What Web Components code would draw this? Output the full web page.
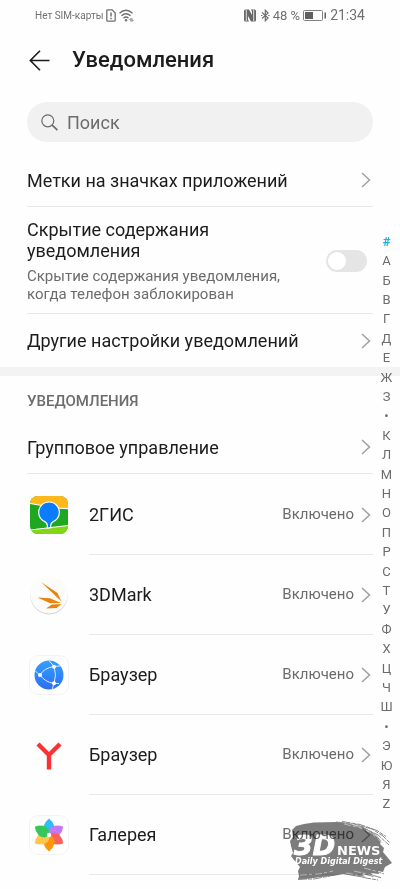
<!DOCTYPE html>
<html lang="ru">
<head>
<meta charset="utf-8">
<meta name="viewport" content="width=device-width, initial-scale=1">
<title>Уведомления</title>
<style>
    body {
        margin: 0;
        background: #fefefe;
        color: #1c1c1c;
        font-family: Roboto, "Noto Sans", sans-serif;
        font-size: 18px;
        line-height: 21px;
        --gutter: 27px;
        --muted: #6c6c6c;
        --line: #e8e8e8;
    }
</style>
</head>
<body>
<settings-page>
    <status-bar slot="status" network="Нет SIM-карты" battery="48 %" time="21:34"></status-bar>
    <page-header slot="header">Уведомления</page-header>
    <search-field label="Поиск"></search-field>
    <settings-row>Метки на значках приложений</settings-row>
    <switch-row>
        Скрытие содержания уведомления
        <span slot="hint">Скрытие содержания уведомления, когда телефон заблокирован</span>
    </switch-row>
    <settings-row last>Другие настройки уведомлений</settings-row>
    <section-title>УВЕДОМЛЕНИЯ</section-title>
    <settings-row>Групповое управление</settings-row>
    <app-list>
        <app-row icon="gis" state="Включено">2ГИС</app-row>
        <app-row icon="mark" state="Включено">3DMark</app-row>
        <app-row icon="browser" state="Включено">Браузер</app-row>
        <app-row icon="yandex" state="Включено">Браузер</app-row>
        <app-row icon="gallery" state="Включено">Галерея</app-row>
    </app-list>
    <alpha-index slot="overlay" letters="#АБВГДЕЖЗ•КЛМНОПРСТУФХЦЧШ•ЭЮЯZ"></alpha-index>
    <news-mark slot="overlay"></news-mark>
</settings-page>

<script>
/**
 * Base class, clones the given markup into an open shadow root.
 */
class BaseElement extends HTMLElement {
    connectedCallback() {
        if(this.shadowRoot) {
            return;
        }

        const template = document.createElement("template");

        template.innerHTML = this.render();
        this.attachShadow({mode: "open"});
        this.shadowRoot.appendChild(template.content.cloneNode(true));
    }
}

const chevron = `
    <svg width="10" height="16" viewBox="0 0 10 16" fill="none" stroke="#a0a0a0" stroke-width="1.5" aria-hidden="true">
        <path d="M1 1l7.5 7L1 15"/>
    </svg>`;

class SettingsPage extends BaseElement {
    render() {
        return `
            <style>
                :host {
                    display: block;
                    position: relative;
                    min-height: 100vh;
                    overflow: hidden;
                }
            </style>
            <slot name="status"></slot>
            <slot name="header"></slot>
            <main><slot></slot></main>
            <slot name="overlay"></slot>`;
    }
}

class StatusBar extends BaseElement {
    render() {
        return `
            <style>
                :host {
                    display: flex;
                    justify-content: space-between;
                    align-items: center;
                    height: 30px;
                    padding: 0 35px;
                    color: #707070;
                    font-size: 14px;
                }
                div { display: flex; align-items: center; gap: 3px; }
                .network { font-size: 10px; }
                .battery { font-size: 13px; }
                svg { display: block; }
            </style>
            <div>
                <span class="network">${this.getAttribute("network")}</span>
                <svg width="10" height="13" viewBox="0 0 10 13" fill="none" stroke="#707070" stroke-width="1.3">
                    <path d="M1.6.8h4.6L9.2 4v7.2q0 1-1 1H1.8q-1 0-1-1V1.6q0-.8.8-.8z"/>
                    <path d="M5 3.4v4M5 8.7v1.5" stroke-width="1.5"/>
                </svg>
                <svg width="15" height="13" viewBox="0 0 15 13" fill="none" stroke="#707070" stroke-width="1.4">
                    <path d="M.5 4.3q6.500-6 13 0M2.500 6.800q4.500-4 9 0M4.500 9.200q2.500-2.200 5 0"/>
                    <circle cx="7" cy="11.300" r="1.200" fill="#707070" stroke="none"/>
                    <path d="M10.200 11.200l1.600-1.700v3M13 9v3.500l1.700-1.700" stroke-width=".8"/>
                </svg>
            </div>
            <div>
                <svg width="12" height="13" viewBox="0 0 12 13">
                    <path fill="#686868" d="M1.500.5H5l3 5.500V2.500L7 .5h3.500q1.500 0 1.500 1.500v9q0 1.500-1.500 1.500H7L4 7v3.500l1 2H1.500Q0 12.500 0 11V2Q0 .5 1.500.5z"/>
                    <path fill="none" stroke="#fefefe" stroke-width=".8" d="M2.300 1v11M9.700 1v11"/>
                </svg>
                <svg width="11" height="13" viewBox="-2 0 11 13" fill="none" stroke="#707070" stroke-width="1.200">
                    <path d="M1 3.500l6 5.500-2.700 2.800V1.200L7 4 1 9.500"/>
                    <path d="M0 6.500h1.400M7.200 6.500h1.400"/>
                </svg>
                <span class="battery">${this.getAttribute("battery")}</span>
                <svg width="24" height="11" viewBox="0 0 24 11">
                    <rect x=".5" y=".5" width="19" height="10" rx="1" fill="none" stroke="#808080"/>
                    <path fill="#606060" d="M2 2h8v7H2zM21.500 2.500H23v6h-1.500z"/>
                </svg>
                <span>${this.getAttribute("time")}</span>
            </div>`;
    }
}

class PageHeader extends BaseElement {
    render() {
        return `
            <style>
                :host {
                    display: flex;
                    align-items: center;
                    gap: 20px;
                    height: 60px;
                    padding: 0 var(--gutter);
                }
                button {
                    display: flex;
                    width: 25px;
                    padding: 0 2px;
                    border: 0;
                    background: none;
                }
                h1 {
                    margin: 0;
                    font-size: 22px;
                    font-weight: 500;
                    line-height: 28px;
                }
            </style>
            <button type="button" aria-label="Назад">
                <svg width="21" height="21" viewBox="0 0 21 21" fill="none" stroke="#1c1c1c" stroke-width="1.6">
                    <path d="M20.500 10.500H1.500M11 .8l-9.700 9.700L11 20.200"/>
                </svg>
            </button>
            <h1><slot></slot></h1>`;
    }
}

class SearchField extends BaseElement {
    render() {
        const label = this.getAttribute("label");

        return `
            <style>
                :host { display: block; padding: 12px var(--gutter); }
                label {
                    display: flex;
                    align-items: center;
                    gap: 9px;
                    height: 40px;
                    padding: 0 14px;
                    border-radius: 20px;
                    background: #f1f1f1;
                }
                input {
                    flex: 1;
                    min-width: 0;
                    padding: 0;
                    border: 0;
                    outline: 0;
                    background: none;
                    color: inherit;
                    font: inherit;
                }
                input::placeholder { color: var(--muted); opacity: 1; }
            </style>
            <label>
                <svg width="17" height="17" viewBox="0 0 17 17" fill="none" stroke="#6c6c6c" stroke-width="1.2">
                    <circle cx="6.8" cy="6.8" r="6"/>
                    <path d="M11.200 11.200l5.200 5" stroke-width="1.7"/>
                </svg>
                <input type="search" placeholder="${label}" aria-label="${label}">
            </label>`;
    }
}

class SettingsRow extends BaseElement {
    render() {
        return `
            <style>
                :host { display: block; padding: 0 var(--gutter); }
                button {
                    display: flex;
                    justify-content: space-between;
                    align-items: center;
                    box-sizing: border-box;
                    width: 100%;
                    height: 53px;
                    padding: 0 2px 0 0;
                    border: 0;
                    border-bottom: 1px solid var(--line);
                    background: none;
                    color: inherit;
                    font: inherit;
                    text-align: left;
                }
                :host([last]) button { border-bottom: 0; }
            </style>
            <button type="button"><span><slot></slot></span>${chevron}</button>`;
    }
}

class SwitchRow extends BaseElement {
    render() {
        return `
            <style>
                :host { display: block; padding: 0 var(--gutter); }
                label {
                    display: flex;
                    justify-content: space-between;
                    align-items: center;
                    gap: 24px;
                    padding: 12px 6px 10px 0;
                    border-bottom: 1px solid var(--line);
                }
                .text { flex: 1; max-width: 270px; }
                .title { display: block; max-width: 240px; }
                .hint {
                    display: block;
                    margin-top: 6px;
                    color: var(--muted);
                    font-size: 15px;
                    line-height: 18px;
                }
                input {
                    flex: none;
                    appearance: none;
                    width: 41px;
                    height: 22px;
                    margin: 0;
                    padding: 2px;
                    border-radius: 11px;
                    background: #e5e5e5;
                }
                input::before {
                    content: "";
                    display: block;
                    width: 18px;
                    height: 18px;
                    border-radius: 50%;
                    background: #fff;
                }
                input:checked { background: #0a9bf5; }
                input:checked::before { margin-left: auto; }
            </style>
            <label>
                <span class="text">
                    <span class="title"><slot></slot></span>
                    <span class="hint"><slot name="hint"></slot></span>
                </span>
                <input type="checkbox" role="switch">
            </label>`;
    }
}

class SectionTitle extends BaseElement {
    render() {
        return `
            <style>
                :host { display: block; border-top: 9px solid #f3f3f3; }
                h2 {
                    margin: 0;
                    padding: 15px var(--gutter) 9px;
                    color: var(--muted);
                    font-size: 15px;
                    font-weight: 500;
                    line-height: 21px;
                }
            </style>
            <h2><slot></slot></h2>`;
    }
}

class AppList extends BaseElement {
    render() {
        return `
            <style>
                :host { display: block; padding: 1px var(--gutter) 0; }
            </style>
            <div role="list"><slot></slot></div>`;
    }
}

const petals = ["#30bdf5", "#c778f5", "#fa6260", "#ff950a", "#ffc64d", "#35c759"]
    .map((color, i) => `<path fill="${color}" transform="rotate(${i * 60} 22 22)" d="M22 23c-4.500-3-6-5.500-5.500-9.500Q18 8.500 22 5.500q4 3 5.500 8c.5 4-1 6.500-5.500 9.500z"/>`)
    .join("");

const appIcons = {
    gis: `
        <clipPath id="tile"><rect x="3" y="3" width="38" height="38" rx="8"/></clipPath>
        <g clip-path="url(#tile)">
            <path fill="#1fa81f" d="M3 3h38v38H3z"/>
            <path fill="#ffb81c" d="M3 3h38v12.500l-13-.8L3 10.500z"/>
            <path fill="#82d615" d="M3 37l38-4.500V41H3z"/>
            <path fill="none" stroke="#fff" stroke-width="1.2" d="M3 10.500l12 2M29 15l12 .6M3 37l38-4.500"/>
            <path fill="#0a7cff" stroke="#fff" stroke-width="1.2" d="M20.300 35v-3c-.3-2.500-1.800-3.200-4.500-4.500a10.300 10.300 0 1 1 12.400 0c-2.700 1.300-4.200 2-4.500 4.500v2.700z"/>
        </g>`,
    mark: `
        <circle cx="22" cy="23" r="18.5" fill="#d2d2d2"/>
        <circle cx="22" cy="22" r="18.5" fill="#fcfcfc"/>
        <path fill="#e88510" d="M14 9l16.500 11 4 8.500zM10.500 24.500l12.500.7L34 30l-11 .2zM19 35.500l6-4 9.500-.4-5 4z"/>`,
    browser: `
        <rect x="2.5" y="2.5" width="39" height="39" rx="9" fill="#fff" stroke="#f3f3f3"/>
        <linearGradient id="globe" x2="0" y2="1"><stop stop-color="#32a0ff"/><stop offset="1" stop-color="#2f6df2"/></linearGradient>
        <circle cx="22" cy="22" r="14.5" fill="url(#globe)"/>
        <path fill="none" stroke="#dcecff" d="M13 22q4-7 14-8.500l6-.5M27 13.500q3 8 0 17M13 22q5 7 14 8.500l5 0M13 22q-2-1-4.500-4M27 13.500l-5-6M27 30.500l-2 6"/>
        <g fill="#fff"><circle cx="13" cy="22" r="2"/><circle cx="27" cy="13.700" r="2"/><circle cx="27" cy="30.300" r="2"/></g>`,
    yandex: `<path fill="none" stroke="#fa3232" stroke-width="4.4" d="M11 11l11 11 11-11M22 21v15.500"/>`,
    gallery: `
        <rect x="2.5" y="2.5" width="39" height="39" rx="9" fill="#fff" stroke="#f3f3f3"/>
        ${petals}
        <circle cx="22" cy="22" r="2.2" fill="#fff"/>`
};

class AppRow extends BaseElement {
    render() {
        return `
            <style>
                :host { display: block; }
                button {
                    display: flex;
                    align-items: center;
                    gap: 18px;
                    width: 100%;
                    height: 80px;
                    padding: 0;
                    border: 0;
                    background: none;
                    color: inherit;
                    font: inherit;
                    text-align: left;
                }
                .body {
                    display: flex;
                    flex: 1;
                    align-items: center;
                    gap: 7px;
                    box-sizing: border-box;
                    height: 100%;
                    padding-right: 2px;
                    border-bottom: 1px solid var(--line);
                }
                .name { flex: 1; }
                .state { color: var(--muted); font-size: 15px; }
            </style>
            <button type="button">
                <svg width="44" height="44" viewBox="0 0 44 44" aria-hidden="true">${appIcons[this.getAttribute("icon")]}</svg>
                <span class="body">
                    <span class="name"><slot></slot></span>
                    <span class="state">${this.getAttribute("state")}</span>
                    ${chevron}
                </span>
            </button>`;
    }

    connectedCallback() {
        super.connectedCallback();
        this.setAttribute("role", "listitem");
    }
}

/**
 * Quick-jump letters along the right edge, lies over the list.
 */
class AlphaIndex extends BaseElement {
    render() {
        const items = [...this.getAttribute("letters")]
            .map((letter) => `<a href="#">${letter}</a>`)
            .join("");

        return `
            <style>
                :host {
                    position: absolute;
                    top: 232px;
                    right: 0;
                    width: 27px;
                    height: 582px;
                }
                nav {
                    display: flex;
                    flex-direction: column;
                    height: 100%;
                }
                a {
                    display: flex;
                    flex: 1;
                    justify-content: center;
                    align-items: center;
                    color: var(--muted);
                    font-size: 13px;
                    line-height: 18px;
                    text-decoration: none;
                }
                a:first-child { color: #1eaee8; font-weight: 700; }
            </style>
            <nav aria-label="Алфавитный указатель">${items}</nav>`;
    }
}

/**
 * Brush-stroke logo in the bottom corner, the list shows through it.
 */
class NewsMark extends BaseElement {
    render() {
        return `
            <style>
                :host {
                    position: absolute;
                    right: 6px;
                    bottom: 7px;
                    mix-blend-mode: multiply;
                    pointer-events: none;
                }
                svg { display: block; }
                text { fill: #fff; font-family: "DejaVu Sans", sans-serif; font-weight: 700; }
            </style>
            <svg width="106" height="62" viewBox="0 0 106 62">
                <path fill="#7c7c7c" d="M4 10l4-4 8-2 10-1.500 24-.5 12 2 12 3 10 5 5 4 4 5-1 3 4 4-1 4 5 6 4 5-7 4-2 5-5-1 1 3-8-1 3 4-12-3 4 4-12-2-11-2-10 2-12 1-15 2-8 1 1-4-1-5 2-4-6-7-3-4 2-3-2-7-1-5 3-4z"/>
                <path fill="none" stroke="#8a8a8a" stroke-dasharray="9 1 4 1" d="M48 2l18 2 18 5 11 7 7 7M54 1.500l18 3 17 6 9 6M72 6l18 9 11 10M60 52l18 6 12 2M70 51l24 7M80 49l16 5M10 59l16 0 16-3"/>
                <path fill="none" stroke="#d8d8d8" stroke-width=".7" stroke-dasharray="7 2 3 3" d="M56 4l17 4 14 7 9 8M64 4l18 8 12 11M58 53l20 4M66 51l20 5M76 48l15 4M12 55l19-1 14-3"/>
                <text x="6" y="35" font-size="27" font-style="italic" stroke="#fff">3D</text>
                <text x="49" y="35" font-size="13">NEWS</text>
                <text x="7" y="44" font-size="8" font-style="italic">Daily Digital Digest</text>
            </svg>`;
    }
}

customElements.define("settings-page", SettingsPage);
customElements.define("status-bar", StatusBar);
customElements.define("page-header", PageHeader);
customElements.define("search-field", SearchField);
customElements.define("settings-row", SettingsRow);
customElements.define("switch-row", SwitchRow);
customElements.define("section-title", SectionTitle);
customElements.define("app-list", AppList);
customElements.define("app-row", AppRow);
customElements.define("alpha-index", AlphaIndex);
customElements.define("news-mark", NewsMark);
</script>
</body>
</html>
